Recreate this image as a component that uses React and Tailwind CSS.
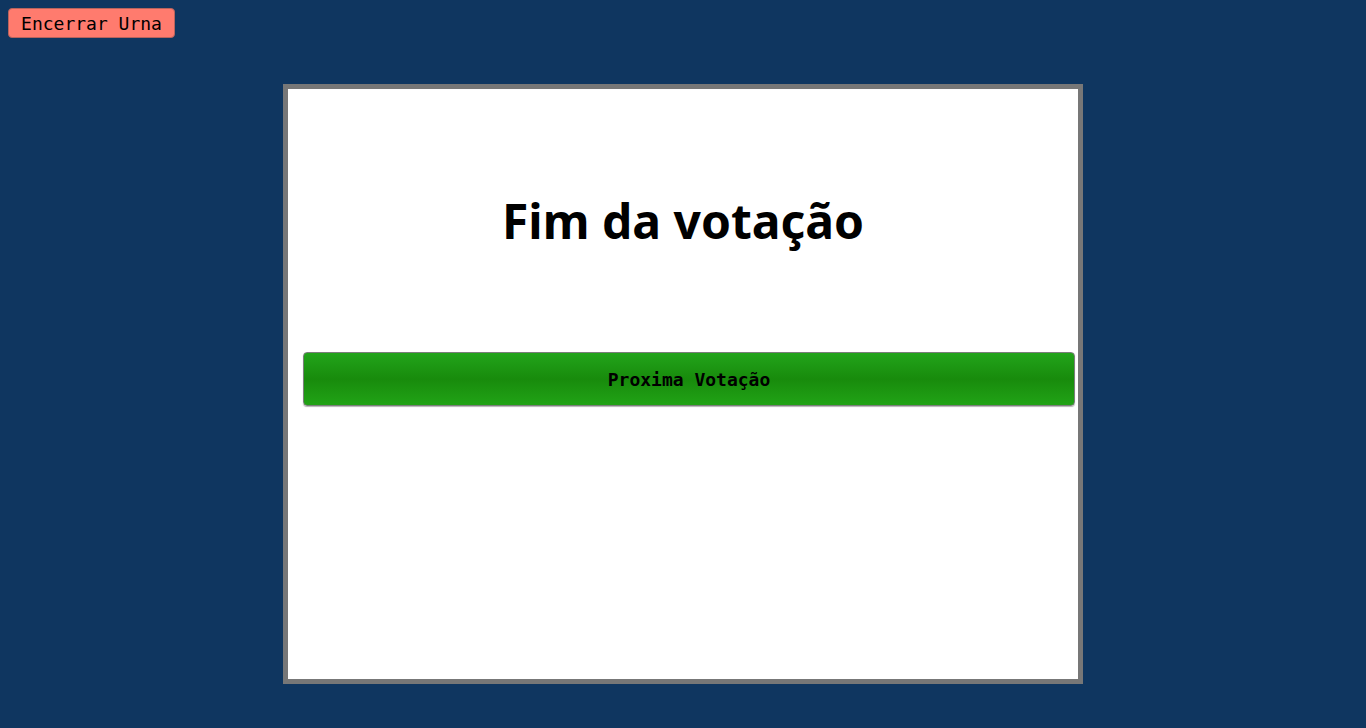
export default function App() {
    return (
        <div className="min-h-[728px] w-full bg-[#0f3660]">
            <div className="pl-2 pt-2">
                <button
                    type="button"
                    className="flex h-[30px] w-[167px] items-center justify-center rounded-[4px] border border-[#b8635c] bg-[#ff7b6e] text-[18px] text-black [font-family:'DejaVu_Sans_Mono',monospace]"
                >
                    Encerrar Urna
                </button>
            </div>

            {/* painel principal */}
            <div className="mx-auto mt-[46px] h-[600px] w-[800px] border-[5px] border-[#777777] bg-white">
                <h1 className="pt-[100px] text-center text-[48px] leading-[64px] font-bold text-black [font-family:'Noto_Sans',sans-serif]">
                    Fim da votação
                </h1>
                <button
                    type="button"
                    className="ml-[15px] mt-[99px] flex h-[54px] w-[772px] items-center justify-center rounded-[4px] border border-[#7a7f7a] bg-gradient-to-b from-[#22a41a] via-[#188b0c] to-[#21a316] text-[18px] font-bold text-black shadow-[0_1px_1px_rgba(0,0,0,0.3)] [font-family:'DejaVu_Sans_Mono',monospace]"
                >
                    Proxima Votação
                </button>
            </div>
        </div>
    );
}
